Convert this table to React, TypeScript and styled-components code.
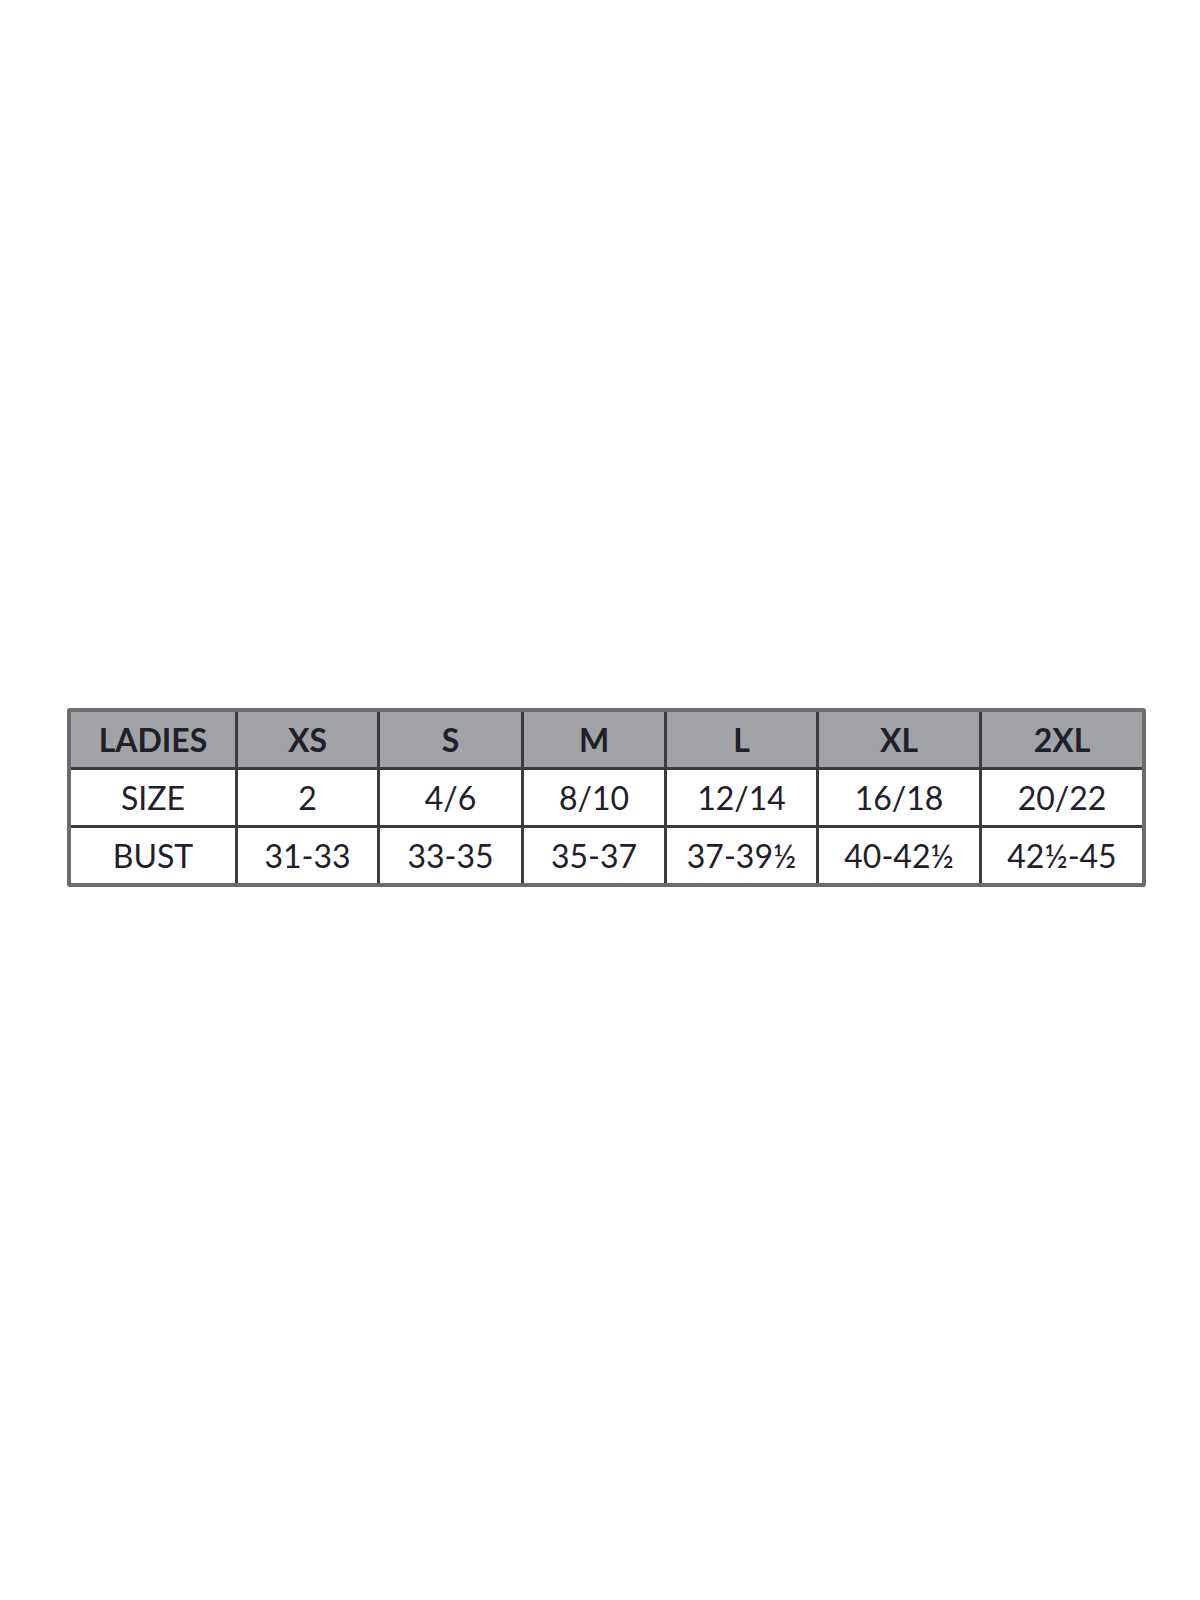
import React from "react";
import styled, { createGlobalStyle } from "styled-components";

const Global = createGlobalStyle`
  html, body { margin: 0; padding: 0; background: #ffffff; }
  body { font-family: Lato, "Open Sans", sans-serif; }
`;

const Page = styled.div`
  width: 1200px;
  min-height: 1600px;
  box-sizing: border-box;
  padding: 708px 0 0 67px;
  background: #ffffff;
`;

const Grid = styled.div`
  display: grid;
  width: 1079px;
  box-sizing: border-box;
  grid-template-columns: 164px 139px 141px 140px 149px 160px 160px;
  grid-auto-rows: 55px;
  gap: 3px;
  border: 4px solid #6c6c6e;
  border-radius: 3px;
  background: #3c3c3e;
`;

const Cell = styled.div<{ $head?: boolean }>`
  display: flex;
  align-items: center;
  justify-content: center;
  background: ${(p) => (p.$head ? "#a2a3a7" : "#ffffff")};
  color: #20202a;
  font-family: Lato, "Open Sans", sans-serif;
  font-size: 32px;
  font-weight: ${(p) => (p.$head ? 700 : 400)};
  line-height: 1;
  padding-top: 1px;
`;

const header = ["LADIES", "XS", "S", "M", "L", "XL", "2XL"];
const rows = [
  ["SIZE", "2", "4/6", "8/10", "12/14", "16/18", "20/22"],
  ["BUST", "31-33", "33-35", "35-37", "37-39½", "40-42½", "42½-45"],
];

export default function App() {
  return (
    <>
      <Global />
      <Page>
        <Grid>
          {header.map((h) => (
            <Cell key={h} $head>
              {h}
            </Cell>
          ))}
          {rows.map((r) =>
            r.map((c, i) => <Cell key={r[0] + i}>{c}</Cell>)
          )}
        </Grid>
      </Page>
    </>
  );
}
